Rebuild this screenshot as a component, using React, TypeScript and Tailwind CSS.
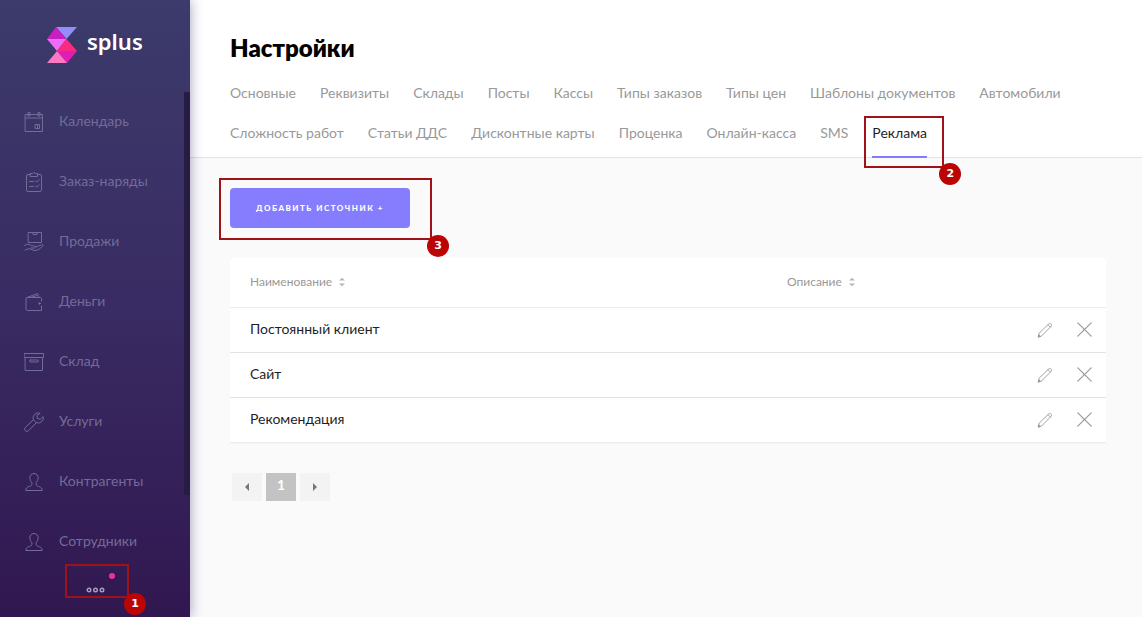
import type { ReactNode } from 'react';

const stroke = {
  fill: 'none',
  stroke: 'currentColor',
  strokeWidth: 1,
  strokeLinecap: 'round',
  strokeLinejoin: 'round',
} as const;

function Icon({ children }: { children: ReactNode }) {
  return (
    <svg viewBox="0 0 20 20" className="size-5 shrink-0" aria-hidden="true" {...stroke}>
      {children}
    </svg>
  );
}

const person = (
  <Icon>
    <path d="M10 1.5c-2.7 0-4.3 1.900-4.100 4.500.100 1.900.900 3.600 2 4.700v2c-.3 1.200-1.900 1.500-3.500 2.100-1.700.600-2.500 1.500-2.600 3.700h16.400c-.1-2.200-.9-3.100-2.600-3.700-1.600-.6-3.200-.9-3.500-2.100v-2c1.100-1.100 1.900-2.800 2-4.700.2-2.600-1.400-4.500-4.100-4.500z" />
  </Icon>
);

const menu: { label: string; icon: ReactNode }[] = [
  {
    label: 'Календарь',
    icon: (
      <Icon>
        <path d="M1.500 2.500h17v17h-17zM1.500 6h17M4 1v3h2V1zM14 1v3h2V1z" />
        <path d="M11.500 12.500h4v4h-4zM13.500 12.500v4" />
      </Icon>
    ),
  },
  {
    label: 'Заказ-наряды',
    icon: (
      <Icon>
        <path d="M6.500 2.500H4A1.500 1.500 0 0 0 2.500 4v14A1.500 1.500 0 0 0 4 19.500h12a1.500 1.500 0 0 0 1.500-1.500V4A1.500 1.500 0 0 0 16 2.500h-2.500M6.500 1.500h2L10 .5l1.500 1h2v3h-7z" />
        <path d="M5.500 9.500h4M5.500 14.500h4M11.500 9l1.200 1.200L15 7.800M11.500 14l1.200 1.200L15 12.800" />
      </Icon>
    ),
  },
  {
    label: 'Продажи',
    icon: (
      <Icon>
        <path d="M4.500.5h13v10h-13zM9 .5v2h4v-2" />
        <path d="M.5 13.500c2-1.600 4-1.600 6-.3 1 .6 2 .8 4 .8 1.600 0 1.600 2 0 2H7M11.800 15c2-.4 3.800-1.700 5.700-2.200 1.700-.4 2.300.7 1 1.700-2.500 1.900-4.500 4-7.500 4-2.500 0-4-1.700-6-1.700-1.500 0-2.500.5-4 1.400" />
      </Icon>
    ),
  },
  {
    label: 'Деньги',
    icon: (
      <Icon>
        <path d="M17.500 9V6.500a1 1 0 0 0-1-1H3.500a1.500 1.500 0 0 0-1.500 1.500v10A1.500 1.500 0 0 0 3.500 18.500h14V14M3 5.500l10.500-4 1.500 4M6.500 5.500 13 3.500" />
        <circle cx="15.500" cy="11.500" r=".8" fill="currentColor" />
      </Icon>
    ),
  },
  {
    label: 'Склад',
    icon: (
      <Icon>
        <path d="M.5 1.500h19v4H.5zM1.500 5.500h17v13h-17zM6.500 8h7a1 1 0 0 1 0 2h-7a1 1 0 0 1 0-2z" />
      </Icon>
    ),
  },
  {
    label: 'Услуги',
    icon: (
      <Icon>
        <path d="M15.800 1.100a5.200 5.200 0 0 0-6.500 6.600L1.300 15.500a2.200 2.200 0 0 0 3.200 3.200l7.900-8a5.200 5.200 0 0 0 6.800-6.200l-2.900 2.800-2.700-.7-.7-2.700z" />
        <path d="M9.300 7.700l3.100 3" />
      </Icon>
    ),
  },
  { label: 'Контрагенты', icon: person },
  { label: 'Сотрудники', icon: person },
];

const tabs = [
  'Основные', 'Реквизиты', 'Склады', 'Посты', 'Кассы', 'Типы заказов', 'Типы цен',
  'Шаблоны документов', 'Автомобили', 'Сложность работ', 'Статьи ДДС',
  'Дисконтные карты', 'Проценка', 'Онлайн-касса', 'SMS', 'Реклама',
];

const sources = ['Постоянный клиент', 'Сайт', 'Рекомендация'];

function Marker({ n, box }: { n: number; box: string }) {
  return (
    <span className={`pointer-events-none absolute z-10 border-2 border-[#a01218] ${box}`}>
      <span className="absolute -right-[19px] -bottom-[19px] flex size-[22px] items-center justify-center rounded-full bg-[#bb0505] pt-px font-['DejaVu_Sans',sans-serif] text-[11px] font-bold text-white">
        {n}
      </span>
    </span>
  );
}

function SortIcon() {
  return (
    <svg viewBox="0 0 6 10" className="h-[10px] w-[6px] fill-[#b5b5b5]" aria-hidden="true">
      <path d="M0 3.500 3 .8l3 2.700zM0 6.500l3 2.700 3-2.700z" />
    </svg>
  );
}

function Sidebar() {
  return (
    <aside className="relative z-10 flex w-[190px] shrink-0 flex-col bg-linear-to-b from-[#3c3b6b] via-[#392b63] via-50% to-[#311750] shadow-[0_0_12px_rgba(50,35,110,0.45)]">
      <a href="#" className="flex h-[92px] items-center gap-[10px] pb-[2px] pl-[47px]">
        <svg viewBox="0 0 30 36" className="h-9 w-[30px]" aria-hidden="true">
          <path d="M9 0h21L19.500 12z" fill="#938df8" />
          <path d="M9 0l10.500 12H0z" fill="#c71fc0" />
          <path d="M0 12h19.500L10 24z" fill="#ed6cf5" />
          <path d="M19.500 12 30 24H10z" fill="#fb2a81" />
          <path d="M10 24h20L20 36z" fill="#e01db4" />
          <path d="M10 24 20 36H0z" fill="#fb78c5" />
        </svg>
        <span className="pb-2 font-['Noto_Sans',sans-serif] text-[22px] leading-7 font-semibold text-white">splus</span>
      </a>
      <nav>
        {menu.map((item) => (
          <a
            key={item.label}
            href="#"
            className="flex h-[60px] items-center gap-[15px] pl-6 text-[14px] text-[#736b98]"
          >
            {item.icon}
            <span className="pb-1">{item.label}</span>
          </a>
        ))}
      </nav>
      <button type="button" aria-label="Ещё" className="relative mx-auto mt-[7px] flex h-[22px] w-16 items-center justify-center text-[#a79fc0]">
        <svg viewBox="0 0 19 6" className="h-[6px] w-[19px]" fill="none" stroke="currentColor" strokeWidth="1.400" aria-hidden="true">
          <circle cx="3" cy="3" r="1.800" />
          <circle cx="9.500" cy="3" r="1.800" />
          <circle cx="16" cy="3" r="1.800" />
        </svg>
        <span className="absolute -top-[6px] right-3 size-[6px] rounded-full bg-[#ee2f9c]" />
        <Marker n={1} box="-top-[15px] right-[-2px] h-[34px] w-16" />
      </button>
      <span className="absolute top-[92px] right-0 h-[403px] w-[6px] bg-[#281c45]" />
    </aside>
  );
}

export default function App() {
  return (
    <div className="flex min-h-screen bg-[#fafafa] font-[Lato,sans-serif] text-[14px]">
      <Sidebar />
      <main className="min-w-0 flex-1">
        <header className="border-b border-[#e2e2e4] bg-white px-10 pt-8 pb-[5px]">
          <h1 className="text-[24px] leading-8 font-extrabold text-black">Настройки</h1>
          <nav className="mt-2 flex flex-wrap gap-x-6">
            {tabs.map((tab) =>
              tab === 'Реклама' ? (
                <a key={tab} href="#" aria-current="page" className="relative flex h-10 items-center text-[#1f1f1f]">
                  {tab}
                  <span className="absolute inset-x-0 -bottom-[6px] h-[2px] bg-[#847df8]" />
                  <Marker n={2} box="top-1 -left-2 h-[52px] w-20" />
                </a>
              ) : (
                <a key={tab} href="#" className="flex h-10 items-center text-[#999]">
                  {tab}
                </a>
              ),
            )}
          </nav>
        </header>

        <section className="pt-[30px] pr-9 pb-10 pl-10">
          <div className="relative w-fit">
            <button type="button" className="block h-10 w-[180px] rounded-[4px] bg-[#857dfd] text-[8px] font-black tracking-[1.5px] text-white uppercase">
              Добавить источник +
            </button>
            <Marker n={3} box="-top-[10px] -left-[11px] h-[62px] w-[213px]" />
          </div>

          <table className="mt-[30px] w-full rounded-[4px] bg-white text-left shadow-[0_1px_1px_rgba(0,0,0,0.03)]">
            <thead>
              <tr className="h-[49px] border-b border-[#ececec] text-[12px] text-[#999]">
                <th className="pl-5 font-normal">
                  <button type="button" className="flex items-center gap-[7px]">
                    Наименование <SortIcon />
                  </button>
                </th>
                <th className="w-[228px] font-normal">
                  <button type="button" className="flex items-center gap-[7px]">
                    Описание <SortIcon />
                  </button>
                </th>
                <th className="w-[91px]" />
              </tr>
            </thead>
            <tbody>
              {sources.map((name) => (
                <tr key={name} className="h-[45px] border-b border-[#e2e2e2] text-[#1f1f1f] last:border-[#ececec]">
                  <td className="pb-[2px] pl-5">{name}</td>
                  <td />
                  <td>
                    <div className="flex items-center justify-end gap-6 pr-[14px] text-[#999]">
                      <button type="button" aria-label={`Изменить: ${name}`}>
                        <svg viewBox="0 0 16 16" className="size-4" {...stroke} strokeWidth={0.9}>
                          <path d="M1.300 14.700l.9-3.600L11.800 1.900c1.500-1.200 3.600.8 2.400 2.300L4.900 13.700zM11 2.700l2.400 2.400" />
                          <path d="M1.300 14.700l.5-1.900 1.400 1.400z" fill="currentColor" />
                        </svg>
                      </button>
                      <button type="button" aria-label={`Удалить: ${name}`}>
                        <svg viewBox="0 0 15 15" className="size-[15px]" {...stroke} strokeWidth={1.2}>
                          <path d="M.8.8l13.400 13.400M14.200.8.8 14.200" />
                        </svg>
                      </button>
                    </div>
                  </td>
                </tr>
              ))}
            </tbody>
          </table>

          <div className="mt-[30px] flex gap-1 pl-[2px]">
            <button type="button" aria-label="Назад" className="flex h-7 w-[30px] items-center justify-center bg-[#f3f3f3]">
              <svg viewBox="0 0 4 8" className="h-2 w-1 fill-[#777]"><path d="M4 0v8L0 4z" /></svg>
            </button>
            <button type="button" className="h-7 w-[30px] bg-[#c3c3c3] pb-1 font-bold text-white">1</button>
            <button type="button" aria-label="Вперёд" className="flex h-7 w-[30px] items-center justify-center bg-[#f3f3f3]">
              <svg viewBox="0 0 4 8" className="h-2 w-1 fill-[#777]"><path d="M0 0v8l4-4z" /></svg>
            </button>
          </div>
        </section>
      </main>
    </div>
  );
}
